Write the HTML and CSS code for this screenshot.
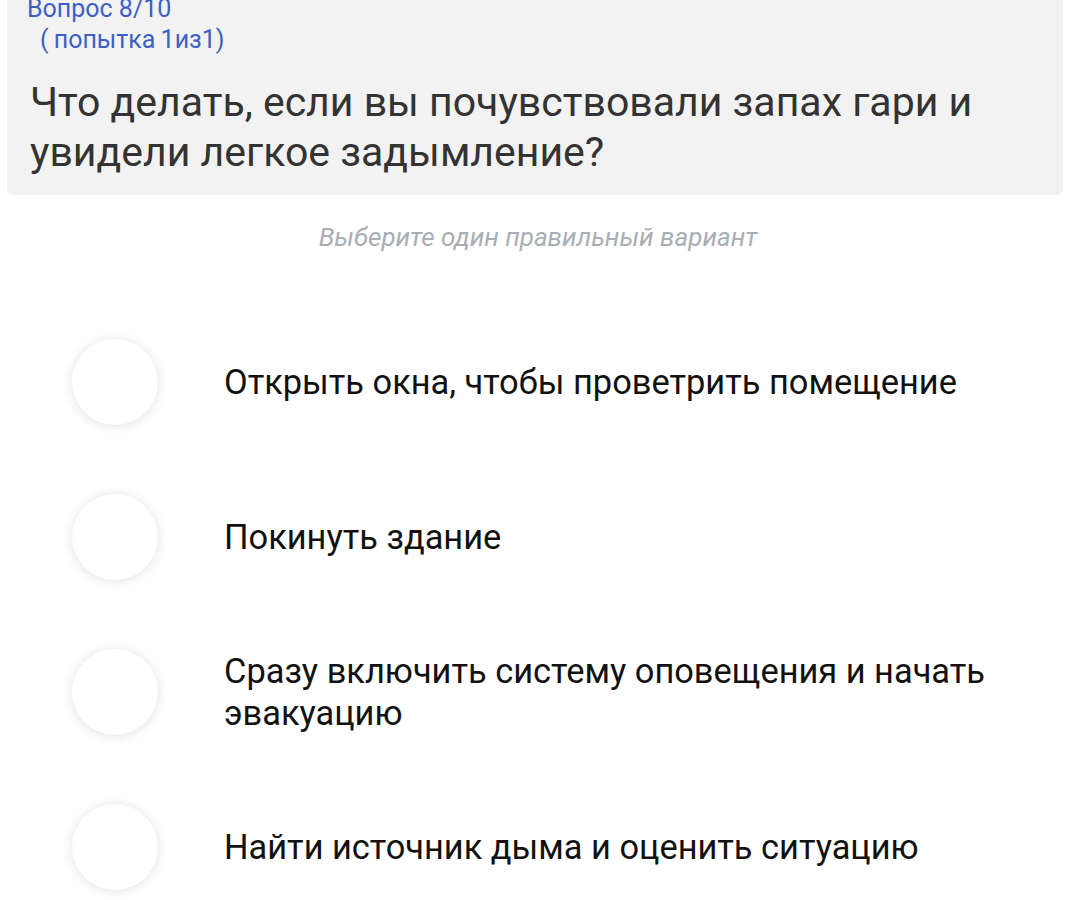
FILE: index.html
```html
<!DOCTYPE html>
<html>
	<head>
		<meta charset="UTF-8">
		<title>Вопрос 8/10</title>
		<link rel="stylesheet" href="styles.css">
	</head>
	<body>
		<div class="card">
			<div class="counter">Вопрос 8/10</div>
			<div class="attempt">( попытка 1из1)</div>
			<h1 class="question">Что делать, если вы почувствовали запах гари и увидели легкое задымление?</h1>
		</div>
		<p class="hint">Выберите один правильный вариант</p>
		<ul class="answers">
			<li><span class="radio"></span><span class="label">Открыть окна, чтобы проветрить помещение</span></li>
			<li><span class="radio"></span><span class="label">Покинуть здание</span></li>
			<li><span class="radio"></span><span class="label">Сразу включить систему оповещения и начать эвакуацию</span></li>
			<li><span class="radio"></span><span class="label">Найти источник дыма и оценить ситуацию</span></li>
		</ul>
	</body>
</html>
```

FILE: styles.css
```css
* {margin:0; padding:0; box-sizing:border-box;}
li {list-style:none;}
body {background:#fff; font-family:Roboto, "Noto Sans", sans-serif; width:1076px; overflow:hidden;}

.card {margin:0 13px 0 7px; background:#f2f2f2; border-radius:0 0 6px 6px; padding:0 30px 18px 23px;}
.counter {color:#3d5fc4; font-size:25px; line-height:26px; margin:-4px 0 0 -3px;}
.attempt {color:#3d5fc4; font-size:25px; line-height:30px; margin-top:3px; padding-left:10px; word-spacing:-1px;}
.question {font-weight:400; color:#333; font-size:41px; line-height:50px; margin-top:22px;}

.hint {text-align:center; color:#a9aeb4; font-style:italic; font-size:26px; line-height:30px; margin-top:27px;}

.answers {margin-top:52px;}
.answers li {display:flex; align-items:center; height:155px; padding-left:72px;}
.radio {flex:none; width:86px; height:86px; border-radius:50%; background:#fff; box-shadow:0 1px 12px rgba(0,0,0,0.12);}
.label {margin-left:66px; max-width:800px; color:#111; font-size:34.4px; line-height:42px;}
```
